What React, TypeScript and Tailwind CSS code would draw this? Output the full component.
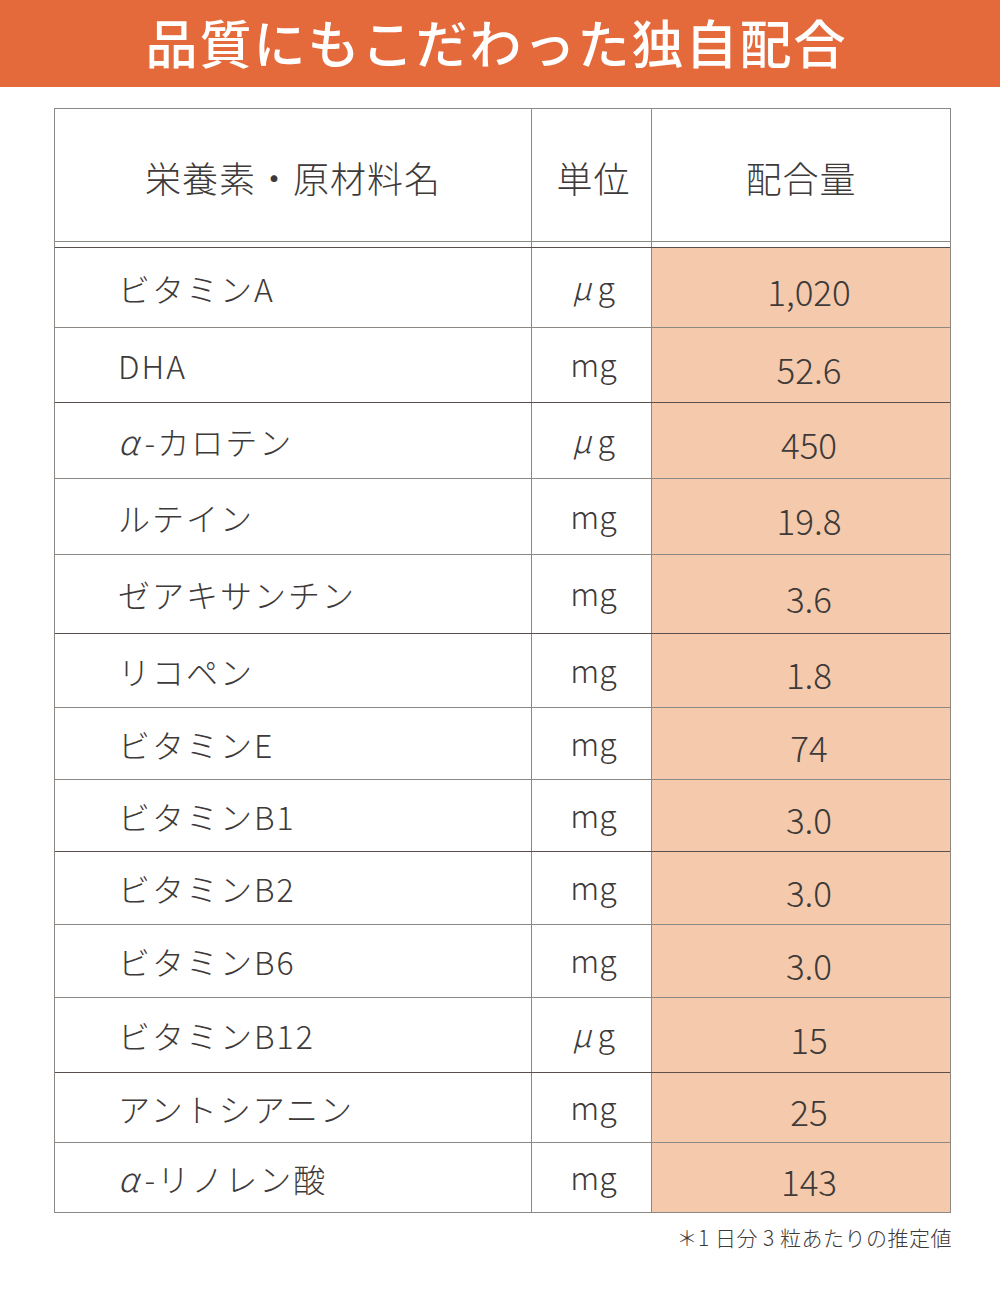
const rows = [
  { name: 'ビタミンA', unit: 'μg', value: '1,020', h: 'h-[80px]' },
  { name: 'DHA', unit: 'mg', value: '52.6', h: 'h-[75px]' },
  { name: 'α-カロテン', unit: 'μg', value: '450', h: 'h-[76px]' },
  { name: 'ルテイン', unit: 'mg', value: '19.8', h: 'h-[76px]' },
  { name: 'ゼアキサンチン', unit: 'mg', value: '3.6', h: 'h-[79px]' },
  { name: 'リコペン', unit: 'mg', value: '1.8', h: 'h-[74px]' },
  { name: 'ビタミンE', unit: 'mg', value: '74', h: 'h-[72px]' },
  { name: 'ビタミンB1', unit: 'mg', value: '3.0', h: 'h-[72px]' },
  { name: 'ビタミンB2', unit: 'mg', value: '3.0', h: 'h-[73px]' },
  { name: 'ビタミンB6', unit: 'mg', value: '3.0', h: 'h-[73px]' },
  { name: 'ビタミンB12', unit: 'μg', value: '15', h: 'h-[75px]' },
  { name: 'アントシアニン', unit: 'mg', value: '25', h: 'h-[70px]' },
  { name: 'α-リノレン酸', unit: 'mg', value: '143', h: 'h-[69px]' },
];

const font = "font-['Noto_Sans_CJK_JP','Noto_Sans',sans-serif]";

function Name({ text }: { text: string }) {
  if (text.startsWith('α')) {
    return (
      <span>
        <span className="mr-[4px] italic text-[34px]">α</span>
        {text.slice(1)}
      </span>
    );
  }
  return <span>{text}</span>;
}

export default function App() {
  return (
    <div className={`w-[1000px] h-[1291px] bg-white text-[#3e3a39] font-light ${font}`}>
      <div className="flex h-[87px] items-center justify-center bg-[#e46a3c] pb-1 pr-[7px]">
        <h1 className="text-[52px] font-medium tracking-[2px] text-white">品質にもこだわった独自配合</h1>
      </div>

      <div className="ml-[54px] mt-[21px] w-[897px] border-l border-r border-t border-[#8e8884]">
        <div className="grid h-[133px] grid-cols-[477px_120px_1fr] border-b border-[#8e8884]">
          <div className="flex items-center justify-center border-r border-[#8e8884] pt-1 text-[36px] tracking-[1px]">
            栄養素・原材料名
          </div>
          <div className="flex items-center justify-center border-r border-[#8e8884] pt-1 pl-1 text-[36px] tracking-[1px]">
            単位
          </div>
          <div className="flex items-center justify-center pt-1 text-[36px] tracking-[1px]">配合量</div>
        </div>
        <div className="grid h-[6px] grid-cols-[477px_120px_1fr] border-b border-[#5a4f4c]">
          <div className="border-r border-[#8e8884]" />
          <div className="border-r border-[#8e8884]" />
          <div />
        </div>

        {rows.map((r, i) => (
          <div
            key={r.name}
            className={`grid ${r.h} grid-cols-[477px_120px_1fr] ${
              i < rows.length - 1 ? 'border-b' : ''
            } ${i % 3 === 1 ? 'border-[#5a4f4c]' : 'border-[#8e8884]'}`}
          >
            <div className="flex items-center border-r border-[#8e8884] pl-[63px] text-[32px] tracking-[2px]">
              <Name text={r.name} />
            </div>
            <div className="flex items-center justify-center border-r border-[#8e8884] pb-1 pl-1 text-[32px]">
              {r.unit === 'μg' ? (
                <span>
                  <span className="mr-[6px] italic">μ</span>g
                </span>
              ) : (
                r.unit
              )}
            </div>
            <div className="flex items-center justify-center bg-[#f4c9ac] pl-4 pt-2 text-[35px]">{r.value}</div>
          </div>
        ))}
      </div>
      <div className="ml-[54px] w-[897px] border-t border-[#8e8884]" />

      <p className="mr-[48px] mt-[9px] text-right text-[21px] tracking-[0.5px]">＊1 日分 3 粒あたりの推定値</p>
    </div>
  );
}
